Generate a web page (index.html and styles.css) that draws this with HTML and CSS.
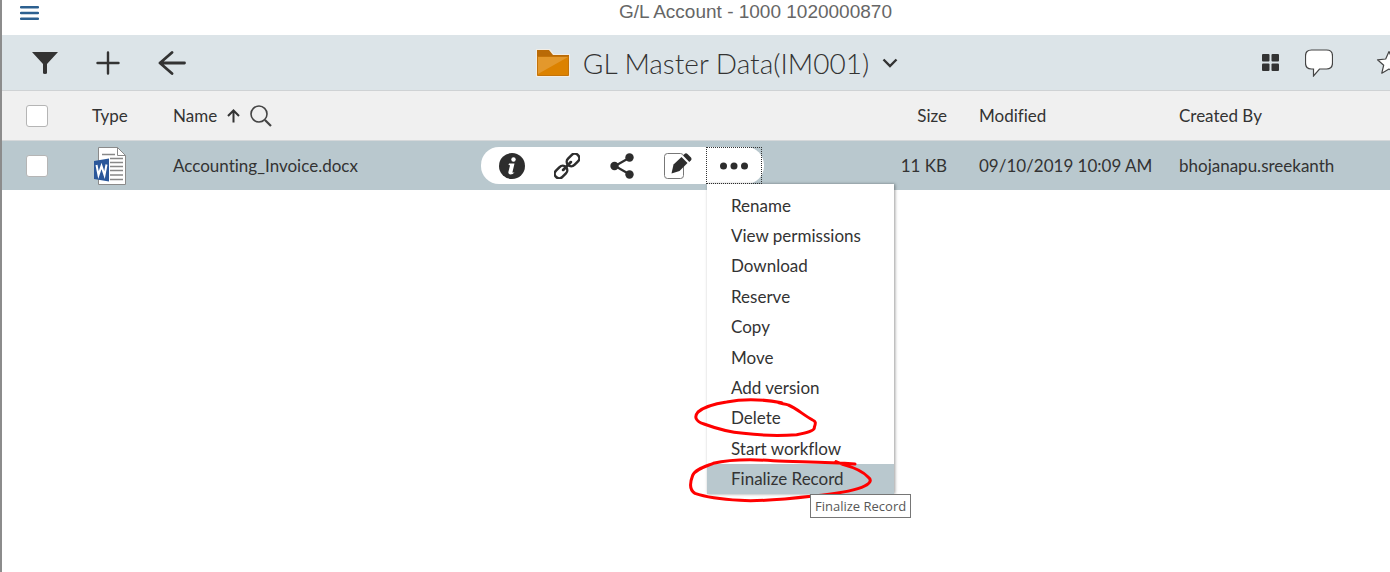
FILE: index.html
```html
<!DOCTYPE html>
<html lang="en">

<head>
    <meta charset="UTF-8">
    <meta name="viewport" content="width=device-width, initial-scale=1.0">
    <title>G/L Account - 1000 1020000870</title>
    <link rel="stylesheet" href="styles.css">
</head>

<body>
    <header class="page-header">
        <button type="button" class="icon-btn" aria-label="Menu">
            <svg width="19" height="14" viewBox="0 0 19 14" stroke="#2c6090" stroke-width="2.400" stroke-linecap="round"><path d="M1 1.200h17M1 7h17M1 12.800h17"/></svg>
        </button>
        <h1>G/L Account - 1000 1020000870</h1>
    </header>

    <nav class="toolbar">
        <div class="tools tools-left">
            <button type="button" class="icon-btn" aria-label="Filter">
                <svg width="26" height="24" viewBox="0 0 26 24" fill="#333"><path d="M0 1h26L15 13v9q0 1-2 1t-2-1v-9z"/></svg>
            </button>
            <button type="button" class="icon-btn" aria-label="Add">
                <svg width="24" height="24" viewBox="0 0 24 24" stroke="#333" stroke-width="2.4" stroke-linecap="round"><path d="M12 1.500v21M1.500 12h21"/></svg>
            </button>
            <button type="button" class="icon-btn" aria-label="Back">
                <svg width="28" height="24" viewBox="0 0 28 24" fill="none" stroke="#333" stroke-width="2.800" stroke-linecap="round" stroke-linejoin="round"><path d="M14 1.500L2 12l12 10.500M2 12h24.500"/></svg>
            </button>
        </div>
        <div class="folder">
            <svg width="34" height="28" viewBox="0 0 34 28">
                <path d="M0 0h14l4 5h16v23H0z" fill="#f3ede4"/>
                <path d="M1 1h12l4 5h16v8H1z" fill="#b96a06"/>
                <path d="M1.500 7.500h31v19h-31z" fill="#dc8200" stroke="#c47308"/>
                <path d="M2 8h30L2 25z" fill="#e3982c"/>
            </svg>
            <h2>GL Master Data(IM001)</h2>
            <button type="button" class="icon-btn" aria-label="Folder actions">
                <svg width="16" height="10" viewBox="0 0 16 10" fill="none" stroke="#333" stroke-width="2.400"><path d="M1.500 1.500L8 8l6.500-6.500"/></svg>
            </button>
        </div>
        <div class="tools tools-right">
            <button type="button" class="icon-btn" aria-label="Grid view">
                <svg width="17" height="17" viewBox="0 0 17 17" fill="#333"><rect width="7.500" height="7.500" rx="1"/><rect x="9.500" width="7.500" height="7.500" rx="1"/><rect y="9.500" width="7.500" height="7.500" rx="1"/><rect x="9.500" y="9.500" width="7.500" height="7.500" rx="1"/></svg>
            </button>
            <button type="button" class="icon-btn" aria-label="Comments">
                <svg width="28" height="28" viewBox="0 0 28 28" fill="#fff" stroke="#444" stroke-width="1.200"><path d="M6.500 1h15q6 0 6 6v7q0 6-6 6h-7L8.500 27V20h-2q-6 0-6-6V7q0-6 6-6z"/></svg>
            </button>
            <button type="button" class="icon-btn" aria-label="Favorite">
                <svg width="26" height="26" viewBox="0 0 26 26" fill="#fff" stroke="#444" stroke-width="1.200" stroke-linejoin="round"><path d="M13 1.500l3.300 7.500 8.200.8-6.200 5.400 1.900 8L13 19l-7.200 4.200 1.900-8L1.500 9.800 9.700 9z"/></svg>
            </button>
        </div>
    </nav>

    <table class="files">
        <thead>
            <tr>
                <th class="col-check"><input type="checkbox" aria-label="Select all"></th>
                <th class="col-type">Type</th>
                <th>
                    <div class="name-head">
                        Name
                        <svg width="13" height="14" viewBox="0 0 13 14" fill="none" stroke="#333" stroke-width="2"><path d="M6.500 13.500V2M1 7l5.500-5.500L12 7"/></svg>
                        <button type="button" class="icon-btn" aria-label="Search by name">
                            <svg width="22" height="22" viewBox="0 0 22 22" fill="none" stroke="#444"><circle cx="9" cy="9" r="8" stroke-width="1.600"/><path d="M15 15l6 6" stroke-width="2.200"/></svg>
                        </button>
                    </div>
                </th>
                <th class="col-size">Size</th>
                <th class="col-modified">Modified</th>
                <th class="col-created">Created By</th>
            </tr>
        </thead>
        <tbody>
            <tr>
                <td class="col-check"><input type="checkbox" aria-label="Select Accounting_Invoice.docx"></td>
                <td class="col-type">
                    <svg class="doc" width="36" height="38" viewBox="0 0 36 38">
                        <path d="M6.500.5h19l8 8v29h-27z" fill="#fff" stroke="#8a8a8a"/>
                        <path d="M25.500.5v8h8z" fill="#fff" stroke="#8a8a8a"/>
                        <path d="M10 7.500h13M18 11.500h13M18 15.500h13M18 19.500h13M18 23.500h13M18 28h13M18 32.500h13" stroke="#888" stroke-width="1.400"/>
                        <path d="M2 14l15-2.500v23L2 32z" fill="#2a579a"/>
                        <path d="M4.500 18l2 10 3-9 3 9 2-10.500" fill="none" stroke="#fff" stroke-width="2"/>
                    </svg>
                </td>
                <td class="name-cell">
                    <div class="name-row">
                        <a href="#" class="file-link">Accounting_Invoice.docx</a>
                        <div class="actions">
                            <button type="button" class="icon-btn" aria-label="Properties">
                                <svg width="26" height="26" viewBox="0 0 26 26"><circle cx="13" cy="13" r="13" fill="#2d2d2d"/><circle cx="14.500" cy="6.500" r="2.200" fill="#fff"/><path d="M10 10.500h5.500L13.500 19q-.3 1.200 2 .2-1.500 2.300-4 2.300-2.700-.2-2-3l1.500-6q-.2-.8-1.500-.5z" fill="#fff"/></svg>
                            </button>
                            <button type="button" class="icon-btn" aria-label="Copy link">
                                <svg width="26" height="26" viewBox="0 0 26 26" fill="none" stroke="#2d2d2d" stroke-width="2.500"><g transform="rotate(-45 13 13)"><rect x="-2.500" y="8.500" width="14" height="9" rx="4.500"/><rect x="14.500" y="8.500" width="14" height="9" rx="4.500"/><path d="M7.500 13h11" stroke-width="2.800" stroke-linecap="round"/></g></svg>
                            </button>
                            <button type="button" class="icon-btn" aria-label="Share">
                                <svg width="26" height="26" viewBox="0 0 26 26" fill="#2d2d2d"><path d="M20 5L6 13l14 8" fill="none" stroke="#2d2d2d" stroke-width="2.200"/><circle cx="20.500" cy="4.500" r="4.200"/><circle cx="5.500" cy="13" r="4.200"/><circle cx="20.500" cy="21.500" r="4.200"/></svg>
                            </button>
                            <button type="button" class="icon-btn" aria-label="Edit">
                                <svg width="28" height="26" viewBox="0 0 28 26"><rect x=".5" y=".5" width="19" height="25" rx="3" fill="none" stroke="#777"/><path d="M15 5L22 0l3 5-5 4z" fill="#fff"/><path d="M7.500 20.500l2-9L17.500 4l6 6-8 8z" fill="#2d2d2d"/><path d="M19 2.500l1.500-1.500q1.500-1.300 3 0l3.500 3.500q1 1.400 0 2.800L25.300 9z" fill="#2d2d2d"/></svg>
                            </button>
                            <div class="more">
                                <button type="button" class="icon-btn more-btn" aria-label="More actions">
                                    <svg width="28" height="8" viewBox="0 0 28 8" fill="#2d2d2d"><circle cx="3.500" cy="4" r="3.500"/><circle cx="14" cy="4" r="3.500"/><circle cx="24.500" cy="4" r="3.500"/></svg>
                                </button>
                                <div class="menu">
                                    <ul>
                                        <li><button type="button">Rename</button></li>
                                        <li><button type="button">View permissions</button></li>
                                        <li><button type="button">Download</button></li>
                                        <li><button type="button">Reserve</button></li>
                                        <li><button type="button">Copy</button></li>
                                        <li><button type="button">Move</button></li>
                                        <li><button type="button">Add version</button></li>
                                        <li><button type="button">Delete</button></li>
                                        <li><button type="button">Start workflow</button></li>
                                        <li><button type="button" class="active">Finalize Record</button></li>
                                    </ul>
                                    <svg class="marks" width="240" height="135" viewBox="0 0 720 405" fill="none" stroke="#f00" stroke-width="9" stroke-linecap="round" stroke-linejoin="round">
                                        <path d="M305 38C250 28 190 26 140 36C100 42 70 52 54 66C42 80 46 94 72 102C110 116 140 126 190 130C240 136 300 138 350 134C380 128 405 122 403 112C408 98 407 94 398 90C370 75 350 55 325 45C315 40 300 42 290 36"/>
                                        <path d="M525 222C430 214 350 216 280 212C220 208 150 208 100 220C75 230 45 238 38 256C28 282 28 300 45 310C80 322 130 328 180 331C240 336 330 326 400 318C460 312 510 305 545 292C572 282 576 270 565 262C550 245 520 232 490 224L468 215"/>
                                    </svg>
                                    <span class="tooltip" role="tooltip">Finalize Record</span>
                                </div>
                            </div>
                        </div>
                    </div>
                </td>
                <td class="col-size">11 KB</td>
                <td class="col-modified">09/10/2019 10:09 AM</td>
                <td class="col-created">bhojanapu.sreekanth</td>
            </tr>
        </tbody>
    </table>
</body>
</html>
```
FILE: styles.css
```css
html {
    overflow: hidden;
}

body {
    margin: 0;
    min-height: 100vh;
    box-sizing: border-box;
    border-left: 2px solid #8c8c8c;
    background-color: white;
    color: #333;
    font-family: 'Lato', sans-serif;
    font-size: 17px;
    font-variant-ligatures: none;
    overflow: hidden;
}

button {
    font: inherit;
    font-variant-ligatures: none;
    color: inherit;
    cursor: pointer;
}

.icon-btn {
    display: flex;
    align-items: center;
    justify-content: center;
    padding: 0;
    border: none;
    background: none;
}

svg {
    display: block;
    flex-shrink: 0;
}

.page-header {
    display: flex;
    align-items: flex-start;
    gap: 40px;
    height: 35px;
    margin-right: -42px;
    padding-left: 18px;
}

.page-header .icon-btn {
    padding-top: 6px;
}

.page-header h1 {
    flex: 1;
    margin: 0;
    color: #666;
    font-family: 'Liberation Sans', Arial, sans-serif;
    font-size: 19px;
    font-weight: normal;
    line-height: 24px;
    text-align: center;
}

/* wider than the window, the last tool runs off the edge */
.toolbar {
    display: grid;
    grid-template-columns: 1fr auto 1fr;
    align-items: center;
    height: 55px;
    margin-right: -42px;
    border-bottom: 1px solid #cfd2d4;
    background-color: #dce4e8;
}

.tools {
    display: flex;
    align-items: center;
}

.tools-left {
    gap: 38px;
    padding-left: 30px;
}

.tools-right {
    justify-content: flex-end;
    padding-right: 30px;
}

.tools-right .icon-btn {
    margin-left: 26px;
}

.tools-right .icon-btn:last-child {
    margin-left: 43px;
}

.folder {
    display: flex;
    align-items: center;
    gap: 13px;
}

.folder h2 {
    margin: 0;
    font-size: 28px;
    font-weight: 300;
    line-height: 32px;
}

.files {
    width: 100%;
    table-layout: fixed;
    border-collapse: collapse;
}

.files th,
.files td {
    height: 49px;
    padding: 0;
    font-weight: normal;
    text-align: left;
}

.files thead tr {
    background-color: #f0f0f0;
    border-bottom: 1px solid #d5d8da;
}

.files tbody tr {
    background-color: #b9c8ce;
}

.files .col-check {
    width: 66px;
    padding-left: 24px;
}

.files .col-type {
    width: 81px;
}

.files .col-size {
    width: 84px;
    padding-right: 16px;
    text-align: right;
}

.files .col-modified {
    width: 184px;
    padding-left: 16px;
}

.files .col-created {
    width: 211px;
    padding-left: 16px;
}

input[type="checkbox"] {
    display: block;
    appearance: none;
    width: 22px;
    height: 22px;
    margin: 0;
    border: 1px solid #b5b5b5;
    border-radius: 3px;
    background-color: white;
}

.name-head,
.name-row {
    display: flex;
    align-items: center;
    gap: 10px;
}

.name-row {
    justify-content: space-between;
    padding-right: 99px;
}

.file-link {
    color: inherit;
    text-decoration: none;
}

.actions {
    display: flex;
    align-items: center;
    gap: 29px;
    height: 37px;
    padding-left: 18px;
    padding-right: 2px;
    border-radius: 18px;
    background-color: white;
}

.more {
    position: relative;
    margin-left: -15px;
}

.more-btn {
    box-sizing: border-box;
    width: 56px;
    height: 37px;
    border: 1px dotted #333;
}

.menu {
    position: absolute;
    top: 100%;
    left: 1px;
    z-index: 1;
    width: 187px;
    padding-top: 6px;
    background-color: white;
    box-shadow: 1px 0 3px rgba(0, 0, 0, 0.4);
}

.menu ul {
    display: grid;
    grid-auto-rows: 1fr;
    height: 304px;
    margin: 0;
    padding: 0;
    list-style: none;
}

.menu li button {
    width: 100%;
    height: 100%;
    padding: 0 24px;
    border: none;
    background: none;
    text-align: left;
}

.menu li .active {
    background-color: #b9c8ce;
}

/* pen marks drawn over the menu */
.marks {
    position: absolute;
    left: -27px;
    top: 206px;
    pointer-events: none;
}

.tooltip {
    position: absolute;
    left: 103px;
    top: 310px;
    padding: 0 4px;
    border: 1px solid #767676;
    background-color: white;
    color: #575757;
    font-family: 'Open Sans', sans-serif;
    font-size: 13px;
    line-height: 22px;
    white-space: nowrap;
}
```
